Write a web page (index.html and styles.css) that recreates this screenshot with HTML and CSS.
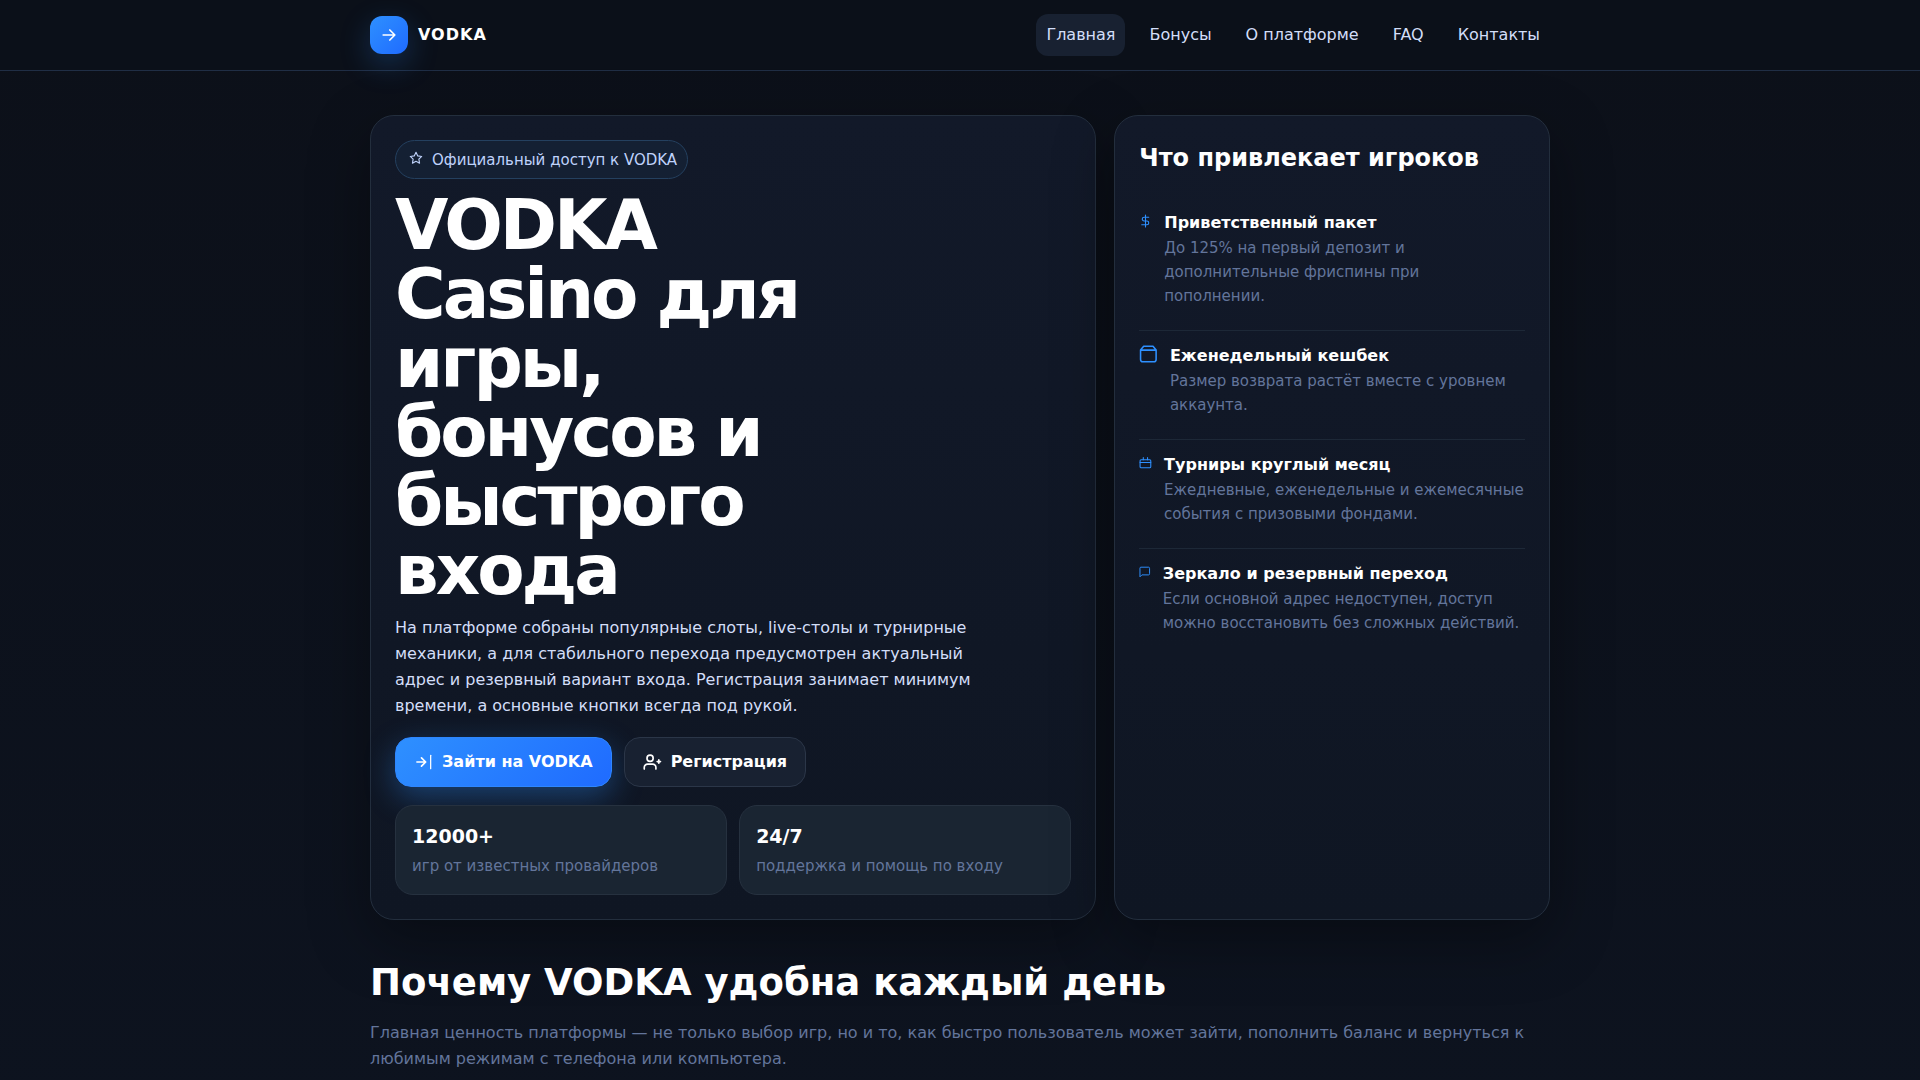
FILE: index.html
```html
<!DOCTYPE html>
<html lang="ru">
<head>
<meta charset="utf-8">
<meta name="viewport" content="width=device-width, initial-scale=1">
<title>VODKA Casino</title>
<link rel="stylesheet" href="styles.css">
</head>
<body>
<header class="header">
  <div class="container header-inner">
    <a class="brand" href="#">
      <span class="brand-mark"><svg class="icon" viewBox="0 0 24 24" aria-hidden="true"><path d="M5 12h14M13 6l6 6-6 6"/></svg></span>
      <span class="brand-name">VODKA</span>
    </a>
    <nav class="nav">
      <a class="nav-link active" href="#">Главная</a>
      <a class="nav-link" href="#bonus">Бонусы</a>
      <a class="nav-link" href="#about">О платформе</a>
      <a class="nav-link" href="#faq">FAQ</a>
      <a class="nav-link" href="#contacts">Контакты</a>
    </nav>
  </div>
</header>
<main class="container">
  <section class="hero">
    <div class="card">
      <span class="badge"><svg class="icon badge-icon" viewBox="-2 -2 28 28" aria-hidden="true"><path d="M12 2l3.100 6.300 6.900 1-5 4.800 1.200 6.900-6.200-3.200L5.800 21 7 14.100 2 9.300l6.900-1z"/></svg>Официальный доступ к VODKA</span>
      <h1 class="hero-title">VODKA Casino для игры, бонусов и быстрого входа</h1>
      <p class="hero-text">На платформе собраны популярные слоты, live-столы и турнирные механики, а для стабильного перехода предусмотрен актуальный адрес и резервный вариант входа. Регистрация занимает минимум времени, а основные кнопки всегда под рукой.</p>
      <div class="actions">
        <button class="btn btn-primary" type="button"><svg class="icon" viewBox="0 0 24 24" aria-hidden="true"><path d="M3.500 12h10M9 7l5 5-5 5"/><path stroke-width="1.500" d="M20 4v16"/></svg>Зайти на VODKA</button>
        <button class="btn" type="button"><svg class="icon" viewBox="0 0 24 24" aria-hidden="true"><circle cx="8.500" cy="7.500" r="3.700"/><path d="M1.500 20.500v-2a4 4 0 0 1 4-4h6a4 4 0 0 1 4 4v2M19 9.500v4M17 11.500h4"/></svg>Регистрация</button>
      </div>
      <div class="stats">
        <div class="stat"><strong class="stat-value">12000+</strong><span class="muted">игр от известных провайдеров</span></div>
        <div class="stat"><strong class="stat-value">24/7</strong><span class="muted">поддержка и помощь по входу</span></div>
      </div>
    </div>
    <aside class="card">
      <h2 class="side-title">Что привлекает игроков</h2>
      <ul class="features">
        <li class="feature"><svg class="icon" viewBox="0 0 24 24" aria-hidden="true"><path d="M12 1v22M18 5H9.500a3.500 3.500 0 0 0 0 7h5a3.500 3.500 0 0 1 0 7H5"/></svg>
          <div><h3 class="feature-title">Приветственный пакет</h3><p class="muted">До 125% на первый депозит и дополнительные фриспины при пополнении.&nbsp;</p></div></li>
        <li class="feature"><svg class="icon" viewBox="0 0 24 24" aria-hidden="true"><path d="M6 2L2 7v12a3 3 0 0 0 3 3h14a3 3 0 0 0 3-3V7l-4-5zM2 7h20"/></svg>
          <div><h3 class="feature-title">Еженедельный кешбек</h3><p class="muted">Размер возврата растёт вместе с уровнем аккаунта.</p></div></li>
        <li class="feature"><svg class="icon" viewBox="0 0 24 24" aria-hidden="true"><path d="M8 2v4M16 2v4M2 11h20"/><rect x="2" y="6" width="20" height="15" rx="2"/></svg>
          <div><h3 class="feature-title">Турниры круглый месяц</h3><p class="muted">Ежедневные, еженедельные и ежемесячные события с призовыми фондами.</p></div></li>
        <li class="feature"><svg class="icon" viewBox="0 0 24 24" aria-hidden="true"><path d="M22 16a2 2 0 0 1-2 2H6l-4 4V4a2 2 0 0 1 2-2h16a2 2 0 0 1 2 2z"/></svg>
          <div><h3 class="feature-title">Зеркало и резервный переход</h3><p class="muted">Если основной адрес недоступен, доступ можно восстановить без сложных действий.</p></div></li>
      </ul>
    </aside>
  </section>
  <section class="why" id="about">
    <h2 class="section-title">Почему VODKA удобна каждый день</h2>
    <p class="section-text">Главная ценность платформы — не только выбор игр, но и то, как быстро пользователь может зайти, пополнить баланс и вернуться к любимым режимам с телефона или компьютера.</p>
  </section>
</main>
</body>
</html>
```
FILE: styles.css
```css
* {
  box-sizing: border-box;
}

body {
  margin: 0;
  min-height: 100vh;
  background: linear-gradient(180deg, #0c1019, #0d131f);
  color: #fff;
  font: 16px/26px "DejaVu Sans", sans-serif;
}

h1, h2, h3, p, ul {
  margin: 0;
  padding: 0;
}

.container {
  width: 100%;
  max-width: 1212px;
  margin: 0 auto;
  padding: 0 16px;
}

.icon {
  width: 20px;
  height: 20px;
  fill: none;
  stroke: currentColor;
  stroke-width: 2;
  stroke-linecap: round;
  stroke-linejoin: round;
}

.header {
  background: #0b1019;
  border-bottom: 1px solid #202e45;
}

.header-inner {
  display: flex;
  align-items: center;
  justify-content: space-between;
  min-height: 70px;
}

.brand {
  display: flex;
  align-items: center;
  gap: 10px;
  color: #fff;
  text-decoration: none;
}

.brand-mark {
  display: grid;
  place-items: center;
  width: 38px;
  height: 38px;
  border-radius: 12px;
  background: linear-gradient(135deg, #2e90ff, #1f6bff);
  box-shadow: 0 10px 30px rgba(46, 144, 255, 0.25);
}

.brand-name {
  font-weight: 700;
  letter-spacing: 1px;
}

.nav {
  display: flex;
  gap: 14px;
}

.nav-link {
  padding: 8px 10px;
  border-radius: 12px;
  color: #d3def8;
  text-decoration: none;
}

.nav-link.active {
  background: #182131;
}

.hero {
  display: grid;
  grid-template-columns: 5fr 3fr;
  gap: 18px;
  padding-top: 44px;
}

.card {
  padding: 24px;
  border: 1px solid #232e3d;
  border-radius: 24px;
  background: linear-gradient(180deg, #121929, #0f1623);
  box-shadow: 0 20px 60px rgba(0, 0, 0, 0.35);
}

.badge {
  display: flex;
  align-items: center;
  gap: 8px;
  width: fit-content;
  padding: 6px 10px 5px 12px;
  border: 1px solid #24405f;
  border-radius: 20px;
  background: #142033;
  color: #bfd2fb;
  font-size: 15px;
}

.badge-icon {
  width: 16px;
  height: 16px;
  margin-bottom: 4px;
}

.hero-title {
  max-width: 10ch;
  margin: 12px 0 10px;
  font-size: 69px;
  line-height: 69px;
  letter-spacing: -3px;
}

.hero-text {
  max-width: 580px;
  color: #d3def8;
}

.actions {
  display: flex;
  flex-wrap: wrap;
  gap: 12px;
  margin: 18px 0;
}

.btn {
  display: flex;
  align-items: center;
  gap: 8px;
  padding: 11px 18px;
  border: 1px solid #2b3648;
  border-radius: 16px;
  background: #182131;
  color: #fff;
  font: inherit;
  font-weight: 700;
}

.btn-primary {
  border-color: #2e86ff;
  background: linear-gradient(135deg, #2e90ff, #1f6bff);
  box-shadow: 0 10px 30px rgba(46, 144, 255, 0.35);
}

.stats {
  display: grid;
  grid-template-columns: 1fr 1fr;
  gap: 12px;
}

.stat {
  padding: 16px;
  border: 1px solid #26313f;
  border-radius: 18px;
  background: #1a2532;
}

.stat-value {
  display: block;
  margin-bottom: 4px;
  font-size: 19px;
  line-height: 28px;
}

.muted {
  display: block;
  color: #63759b;
  font-size: 15px;
  line-height: 24px;
}

.side-title {
  margin-bottom: 22px;
  font-size: 24px;
  line-height: 36px;
}

.features {
  list-style: none;
}

.feature {
  display: flex;
  gap: 12px;
  padding: 12px 0 22px;
  border-bottom: 1px solid #1d2837;
}

.feature:last-child {
  border-bottom: 0;
}

.feature .icon {
  width: 22px;
  margin-top: 1px;
  color: #2e90ff;
}

.feature-title {
  font-size: 16px;
}

.why {
  padding: 40px 0;
}

.section-title {
  margin-bottom: 14px;
  font-size: 37px;
  line-height: 46px;
}

.section-text {
  color: #63759b;
}
```
